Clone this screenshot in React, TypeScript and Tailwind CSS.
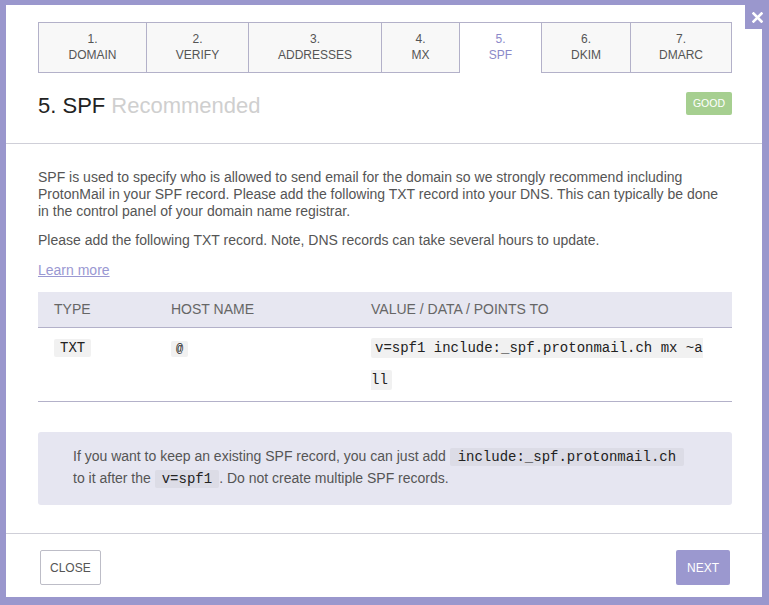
import React from "react";

const tabs = [
  { n: "1.", l: "DOMAIN", w: "w-[107px]" },
  { n: "2.", l: "VERIFY", w: "w-[102px]" },
  { n: "3.", l: "ADDRESSES", w: "w-[133px]" },
  { n: "4.", l: "MX", w: "w-[78px]" },
  { n: "5.", l: "SPF", w: "w-[82px]", active: true },
  { n: "6.", l: "DKIM", w: "w-[89px]" },
  { n: "7.", l: "DMARC", w: "flex-1" },
];

const mono = { fontFamily: '"Liberation Mono", "Courier New", monospace' };

export default function App() {
  return (
    <div
      className="w-[769px] h-[605px] bg-[#9a97cd] pt-[5px] pl-[6px] pr-[7px] relative overflow-hidden"
      style={{ fontFamily: '"Liberation Sans", Arial, sans-serif' }}
    >
      <div className="bg-white h-[592px] flex flex-col text-[#555]">
        <div className="pl-[32px] pr-[30px] pt-[17px]">
          <div className="flex border border-[#b3b1c9] h-[51px]">
            {tabs.map((t, i) => (
              <div
                key={t.l}
                className={
                  t.w +
                  " shrink-0 flex flex-col items-center justify-center pb-[2px] text-[12px] leading-[16px] " +
                  (i > 0 ? "border-l border-[#b3b1c9] " : "") +
                  (t.active
                    ? "bg-white text-[#8b89c9] -mb-px"
                    : "bg-[#f8f8f8] text-[#555]")
                }
              >
                <span>{t.n}</span>
                <span>{t.l}</span>
              </div>
            ))}
          </div>
          <div className="flex items-center justify-between h-[70px]">
            <div className="text-[22px] leading-[26px] text-[#222] -mt-[4px]">
              5. SPF <span className="text-[#cfcfcf]">Recommended</span>
            </div>
            <span className="bg-[#a6cf90] text-white text-[10.5px] leading-[23px] w-[46px] text-center rounded-[2px] -mt-[9px]">
              GOOD
            </span>
          </div>
        </div>
        <div className="border-t border-[#cfcfd8] pl-[32px] pr-[30px] pt-[25px] flex-1 text-[14px]">
          <p className="leading-[17px]">
            SPF is used to specify who is allowed to send email for the domain so we strongly recommend including
            ProtonMail in your SPF record. Please add the following TXT record into your DNS. This can typically be done
            in the control panel of your domain name registrar.
          </p>
          <p className="leading-[17px] mt-[12px]">
            Please add the following TXT record. Note, DNS records can take several hours to update.
          </p>
          <p className="leading-[17px] mt-[13px]">
            <a className="text-[#9a98d2] underline">Learn more</a>
          </p>
          <div className="mt-[13px]">
            <div className="grid grid-cols-[133px_200px_1fr] bg-[#e7e7f1] h-[36px] items-center border-b border-[#b3b1c9] text-[#666]">
              <div className="pl-[16px]">TYPE</div>
              <div>HOST NAME</div>
              <div>VALUE / DATA / POINTS TO</div>
            </div>
            <div
              className="grid grid-cols-[133px_200px_1fr] border-b border-[#b3b1c9] pt-[11px] pb-[5px] text-[14px] leading-[30px] text-[#222]"
              style={mono}
            >
              <div className="pl-[16px] leading-[19px]">
                <span className="bg-[#f1f1f1] px-[6px] py-[1px] rounded-[2px]">TXT</span>
              </div>
              <div className="leading-[19px]">
                <span className="bg-[#f1f1f1] px-[5px] py-[1px] rounded-[2px] text-[12px]">@</span>
              </div>
              <div className="pr-[26px] break-all leading-[32px] -mt-[7px]">
                <span className="bg-[#f1f1f1] px-[4px] py-[2px] rounded-[2px]">
                  v=spf1 include:_spf.protonmail.ch mx ~all
                </span>
              </div>
            </div>
          </div>
          <div className="mt-[30px] bg-[#e6e6f1] rounded-[3px] px-[35px] pt-[14px] pb-[15px] leading-[21px]">
            If you want to keep an existing SPF record, you can just add{" "}
            <code
              className="bg-[#dcdce6] text-[#222] text-[14px] px-[8px] py-[1px] rounded-[2px]"
              style={mono}
            >
              include:_spf.protonmail.ch
            </code>
            <br />
            to it after the{" "}
            <code
              className="bg-[#dcdce6] text-[#222] text-[14px] px-[7px] py-[1px] rounded-[2px]"
              style={mono}
            >
              v=spf1
            </code>
            . Do not create multiple SPF records.
          </div>
        </div>
        <div className="border-t border-[#cfcfd8] h-[64px] flex items-center justify-between pl-[34px] pr-[32px] text-[12px]">
          <button className="h-[35px] px-[9px] border border-[#bdbdc7] rounded-[2px] bg-white text-[#555] mt-[4px]">
            CLOSE
          </button>
          <button className="h-[35px] px-[11px] bg-[#9b98cf] rounded-[2px] text-white mt-[4px]">
            NEXT
          </button>
        </div>
      </div>
      <div className="absolute top-[5px] right-0 w-[24px] h-[24px] bg-[#9a97cd] flex items-center justify-center">
        <svg width="11" height="11" viewBox="0 0 11 11">
          <path d="M1.5 1.5 L9.5 9.5 M9.5 1.5 L1.5 9.5" stroke="white" strokeWidth="2.6" strokeLinecap="square" />
        </svg>
      </div>
    </div>
  );
}
